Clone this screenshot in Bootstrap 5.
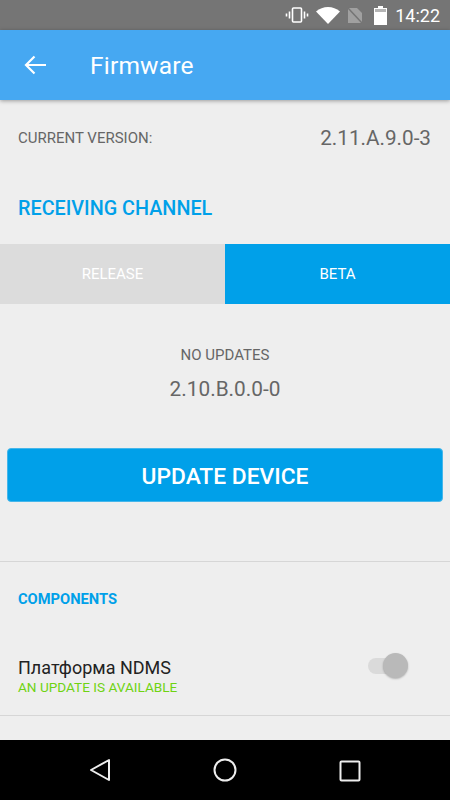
<!DOCTYPE html>
<html lang="en">
<head>
<meta charset="UTF-8">
<meta name="viewport" content="width=device-width, initial-scale=1.0">
<title>Firmware</title>
<link href="https://cdn.jsdelivr.net/npm/bootstrap@5.3.3/dist/css/bootstrap.min.css" rel="stylesheet">
<style>
html, body { height: 100%; }
body { background: #eeeeee; font-family: Roboto, "Liberation Sans", sans-serif; overflow: hidden; }
.phone { width: 450px; height: 800px; }
.status-bar { height: 30px; background: #757575; color: #fff; font-size: 18px; padding-right: 10px; gap: 7px; }
.battery-icon { margin: 0 1px 0 4px; }
.app-bar { height: 70px; background: #46a8f2; color: #fff; padding-left: 24px; box-shadow: 0 1px 4px rgba(0,0,0,.35); position: relative; }
.app-title { font-size: 24.5px; margin-left: 44px; padding-top: 3px; letter-spacing: .2px; }
.screen { flex: 1 1 auto; overflow: hidden; }
.version-row { height: 77px; padding: 0 19px 0 18px; color: #666; }
.version-label { font-size: 15px; }
.version-value { font-size: 20.7px; }
.channel-title { height: 60px; padding: 3px 0 0 18px; color: #00a0e9; font-size: 19.8px; font-weight: 500; }
.channel-tabs { height: 60px; margin-top: 7px; }
.channel-tab { flex: 1 1 50%; font-size: 15px; color: #fff; }
.tab-off { background: #dcdcdc; }
.tab-on { background: #00a0e9; }
.update-info { height: 144px; padding-top: 43px; color: #666; }
.no-updates { font-size: 15px; line-height: 16px; }
.latest-version { font-size: 20.8px; line-height: 24px; margin-top: 14px; }
.btn-update { display: block; width: 436px; height: 54px; margin-left: 7px; background: #00a0e9; color: #fff; font-size: 22.8px; font-weight: 500; border: 1px solid #45b6ea; border-radius: 4px; padding: 4px 0 0; }
.btn-update:hover { background: #00a0e9; color: #fff; }
.components-head { margin-top: 59px; border-top: 1px solid #d6d6d6; height: 72px; padding: 3px 0 0 18px; color: #00a0e9; font-size: 14.7px; font-weight: 700; }
.component-row { height: 83px; padding: 25px 0 0 18px; border-bottom: 1px solid #d6d6d6; }
.component-name { font-size: 18px; line-height: 20px; color: #222; }
.component-status { font-size: 13.6px; line-height: 16px; margin-top: 1px; color: #6fd312; }
.switch-track { width: 34px; height: 16px; border-radius: 8px; background: #dadada; position: relative; margin: 0 48px 0 0; }
.switch-thumb { width: 25px; height: 25px; border-radius: 50%; background: #b9b9b9; position: absolute; right: -6px; top: -5px; box-shadow: 0 1px 2px rgba(0,0,0,.25); }
.nav-bar { height: 60px; background: #000; }
.nav-slot { width: 125px; }
</style>
</head>
<body>
<div class="phone d-flex flex-column">
  <div class="status-bar d-flex align-items-center justify-content-end">
    <svg width="24" height="16" viewBox="0 0 24 16" fill="none" stroke="#fff" stroke-width="1.6"><rect x="7.5" y="1" width="9" height="14" rx="1"/><path d="M4.5 4.5v7M1.5 6.5v3M19.5 4.5v7M22.5 6.5v3"/></svg>
    <svg width="24" height="17" viewBox="0 0 24 17"><path d="M0 4.5C3.5 1.5 7.5 0 12 0s8.500 1.500 12 4.500L12 17z" fill="#fff"/></svg>
    <svg width="16" height="17" viewBox="0 0 16 17"><path d="M1 1h9l5 5v10H1z" fill="#a0a0a0"/><path d="M1 1l14 15" stroke="#757575" stroke-width="1.500"/></svg>
    <svg class="battery-icon" width="13" height="19" viewBox="0 0 13 19"><path d="M4 0h5v2h4v17H0V2h4z" fill="#fff"/><rect x="1" y="3" width="11" height="3" fill="#b5b5b5"/></svg>
    <span>14:22</span>
  </div>

  <div class="app-bar d-flex align-items-center">
    <svg width="22" height="20" viewBox="0 0 22 20" fill="none" stroke="#fff" stroke-width="2.200"><path d="M22 10H2M10.500 1.500L2 10l8.500 8.500"/></svg>
    <span class="app-title">Firmware</span>
  </div>

  <div class="screen">
    <div class="version-row d-flex align-items-center justify-content-between">
      <span class="version-label">CURRENT VERSION:</span>
      <span class="version-value">2.11.A.9.0-3</span>
    </div>
    <div class="channel-title d-flex align-items-center">RECEIVING CHANNEL</div>
    <div class="channel-tabs d-flex">
      <div class="channel-tab tab-off d-flex align-items-center justify-content-center">RELEASE</div>
      <div class="channel-tab tab-on d-flex align-items-center justify-content-center">BETA</div>
    </div>
    <div class="update-info text-center">
      <div class="no-updates">NO UPDATES</div>
      <div class="latest-version">2.10.B.0.0-0</div>
    </div>
    <button type="button" class="btn btn-update">UPDATE DEVICE</button>
    <div class="components-head d-flex align-items-center">COMPONENTS</div>
    <div class="component-row d-flex align-items-start justify-content-between">
      <div>
        <div class="component-name">Платформа NDMS</div>
        <div class="component-status">AN UPDATE IS AVAILABLE</div>
      </div>
      <div class="switch-track"><div class="switch-thumb"></div></div>
    </div>
  </div>

  <div class="nav-bar d-flex align-items-center justify-content-center">
    <div class="nav-slot text-center"><svg width="22" height="24" viewBox="0 0 22 24" fill="none" stroke="#eee" stroke-width="2" stroke-linejoin="round"><path d="M20 2v20L2 12z"/></svg></div>
    <div class="nav-slot text-center"><svg width="24" height="24" viewBox="0 0 24 24" fill="none" stroke="#eee" stroke-width="2"><circle cx="12" cy="12" r="10.500"/></svg></div>
    <div class="nav-slot text-center"><svg width="22" height="22" viewBox="0 0 22 22" fill="none" stroke="#eee" stroke-width="2" stroke-linejoin="round"><rect x="1.500" y="1.500" width="19" height="19" rx="1"/></svg></div>
  </div>
</div>
<script src="https://cdn.jsdelivr.net/npm/bootstrap@5.3.3/dist/js/bootstrap.bundle.min.js"></script>
</body>
</html>
